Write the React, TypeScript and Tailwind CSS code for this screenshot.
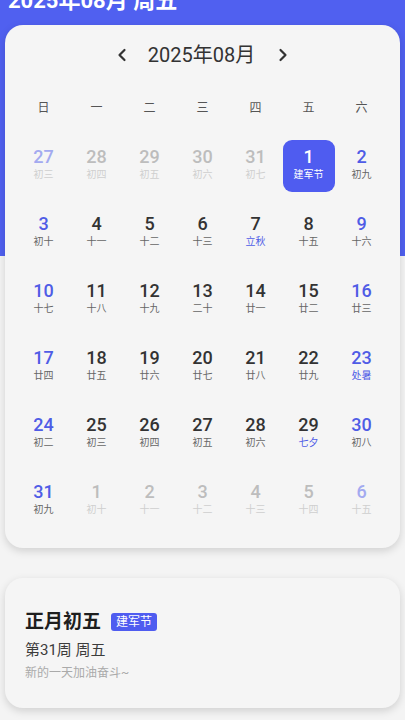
import React from "react";

type Cell = { d: number; l: string; kind: "prev" | "cur" | "next"; fest?: boolean; sel?: boolean };

const lunarAug = [
  "建军节", "初九", "初十", "十一", "十二", "十三", "立秋", "十五", "十六", "十七",
  "十八", "十九", "二十", "廿一", "廿二", "廿三", "廿四", "廿五", "廿六", "廿七",
  "廿八", "廿九", "处暑", "初二", "初三", "初四", "初五", "初六", "七夕", "初八", "初九",
];
const festDays = new Set([7, 23, 29]);

function buildCells(): Cell[] {
  const cells: Cell[] = [];
  const prevL = ["初三", "初四", "初五", "初六", "初七"];
  [27, 28, 29, 30, 31].forEach((d, i) => cells.push({ d, l: prevL[i], kind: "prev" }));
  for (let d = 1; d <= 31; d++) {
    cells.push({ d, l: lunarAug[d - 1], kind: "cur", fest: festDays.has(d), sel: d === 1 });
  }
  const nextL = ["初十", "十一", "十二", "十三", "十四", "十五"];
  [1, 2, 3, 4, 5, 6].forEach((d, i) => cells.push({ d, l: nextL[i], kind: "next" }));
  return cells;
}

const font = { fontFamily: "Roboto, 'Noto Sans CJK SC', 'Noto Sans', sans-serif" };

function DayCell({ c, col }: { c: Cell; col: number }) {
  const weekend = col === 0 || col === 6;
  let numCls = "text-[#333333]";
  let lunCls = "text-[#666666]";
  if (c.kind !== "cur") {
    numCls = weekend ? "text-[#a3aaf0]" : "text-[#bdbdbd]";
    lunCls = "text-[#cfcfcf]";
  } else {
    if (weekend) numCls = "text-[#4f5ce6]";
    if (c.fest) lunCls = "text-[#4f5ce6]";
  }
  if (c.sel) {
    numCls = "text-white";
    lunCls = "text-white";
  }
  return (
    <div className="flex justify-center">
      <div
        className={`w-[52px] h-[52px] flex flex-col items-center pt-[6px] rounded-[9px] ${
          c.sel ? "bg-[#4f5cf0]" : ""
        }`}
      >
        <div className={`text-[18px] leading-[22px] font-medium ${numCls}`}>{c.d}</div>
        <div className={`text-[10px] leading-[14px] ${lunCls}`}>{c.l}</div>
      </div>
    </div>
  );
}

export default function App() {
  const cells = buildCells();
  const weeks = ["日", "一", "二", "三", "四", "五", "六"];
  return (
    <div
      className="w-[405px] h-[720px] overflow-hidden bg-[linear-gradient(to_bottom,#5060f0_256px,#f4f4f4_256px)]"
      style={font}
    >
      <div className="-mt-[11px] pl-[8px] text-[22px] leading-[24px] font-bold text-white">2025年08月 周五</div>
      <div className="mt-[12px] mx-[5px] rounded-[18px] bg-[#f5f5f5] shadow-[0_3px_8px_rgba(0,0,0,0.15)] px-[12px] pt-[18px] pb-[21px]">
        <div className="flex items-center justify-center h-[24px] text-[#333333]">
          <svg width="12" height="14" viewBox="0 0 12 14" className="mr-[20px]">
            <path d="M8.5 2 L3.5 7 L8.5 12" fill="none" stroke="#333" strokeWidth="2.2" strokeLinecap="round" strokeLinejoin="round" />
          </svg>
          <span className="text-[20px] leading-[24px]">2025年08月</span>
          <svg width="12" height="14" viewBox="0 0 12 14" className="ml-[22px]">
            <path d="M3.5 2 L8.5 7 L3.5 12" fill="none" stroke="#333" strokeWidth="2.2" strokeLinecap="round" strokeLinejoin="round" />
          </svg>
        </div>
        <div className="grid grid-cols-7 mt-[33px] h-[16px]">
          {weeks.map((w) => (
            <div key={w} className="text-center text-[12px] leading-[16px] text-[#555555]">
              {w}
            </div>
          ))}
        </div>
        <div className="grid grid-cols-7 gap-y-[15px] mt-[24px]">
          {cells.map((c, i) => (
            <DayCell key={i} c={c} col={i % 7} />
          ))}
        </div>
      </div>
      <div className="mt-[30px] mx-[5px] rounded-[18px] bg-[#f5f5f5] shadow-[0_3px_8px_rgba(0,0,0,0.15)] pl-[20px] pt-[31px] pb-[27px]">
        <div className="flex items-center h-[26px]">
          <span className="text-[19px] leading-[26px] font-bold text-[#1e1e1e]">正月初五</span>
          <span className="ml-[10px] h-[18px] px-[5px] rounded-[3px] bg-[#4f5cf0] text-white text-[12px] leading-[18px]">建军节</span>
        </div>
        <div className="mt-[5px] text-[15px] leading-[20px] text-[#3c3c3c]">第31周 周五</div>
        <div className="mt-[5px] text-[12px] leading-[16px] text-[#aaaaaa]">新的一天加油奋斗~</div>
      </div>
    </div>
  );
}
